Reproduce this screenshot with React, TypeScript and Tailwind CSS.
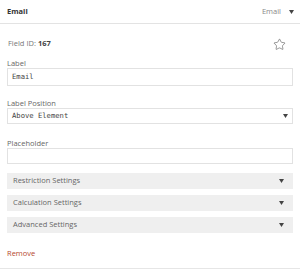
import { Star } from "lucide-react";

const Caret = ({ className = "" }: { className?: string }) => (
  <svg width="5" height="4" viewBox="0 0 5 4" className={className}>
    <path d="M0 0h5L2.5 4z" fill="#444" />
  </svg>
);

function Section({ title }: { title: string }) {
  return (
    <div className="flex h-[16px] items-center justify-between bg-[#efefef] pl-[6px] pr-[9px] text-[7.5px] text-[#666]">
      <span>{title}</span>
      <Caret />
    </div>
  );
}

export default function App() {
  return (
    <div className="relative h-[269px] w-[300px] bg-white font-['Open_Sans',sans-serif] text-[#555]">
      <div className="flex h-[24px] items-center justify-between border-b border-[#e3e3e3] pl-[7px] pr-[6px]">
        <span className="text-[7.5px] font-bold text-[#333]">Email</span>
        <div className="flex items-center gap-[8px] text-[7.5px] text-[#888]">
          <span>Email</span>
          <Caret />
        </div>
      </div>

      <div className="px-[7px]">
        <div className="mt-[14px] flex h-[12px] items-center justify-between pl-[1px] pr-[7px]">
          <span className="text-[7.5px] text-[#777]">
            Field ID: <b className="text-[#444]">167</b>
          </span>
          <Star size={13} strokeWidth={1.1} color="#555" />
        </div>

        <div className="mt-[8px] h-[10px] text-[7.5px] leading-[10px] text-[#666]">Label</div>
        <div className="flex h-[18px] items-center border border-[#e2e2e2] px-[4px] font-['DejaVu_Sans_Mono',monospace] text-[7.2px] text-[#444]">
          Email
        </div>

        <div className="mt-[12px] h-[10px] text-[7.5px] leading-[10px] text-[#666]">Label Position</div>
        <div className="flex h-[16px] items-center justify-between border border-[#e2e2e2] pl-[4px] pr-[4px] font-['DejaVu_Sans_Mono',monospace] text-[7.2px] text-[#444]">
          <span>Above Element</span>
          <Caret />
        </div>

        <div className="mt-[14px] h-[10px] text-[7.5px] leading-[10px] text-[#666]">Placeholder</div>
        <div className="h-[16px] border border-[#e2e2e2]" />

        <div className="mt-[9px] flex flex-col gap-[6px]">
          <Section title="Restriction Settings" />
          <Section title="Calculation Settings" />
          <Section title="Advanced Settings" />
        </div>

        <div className="mt-[15px] h-[10px] text-[7.5px] leading-[10px] text-[#b5482f]">Remove</div>
      </div>

      <div className="absolute bottom-0 left-0 h-px w-full bg-[#e6e6e6]" />
    </div>
  );
}
